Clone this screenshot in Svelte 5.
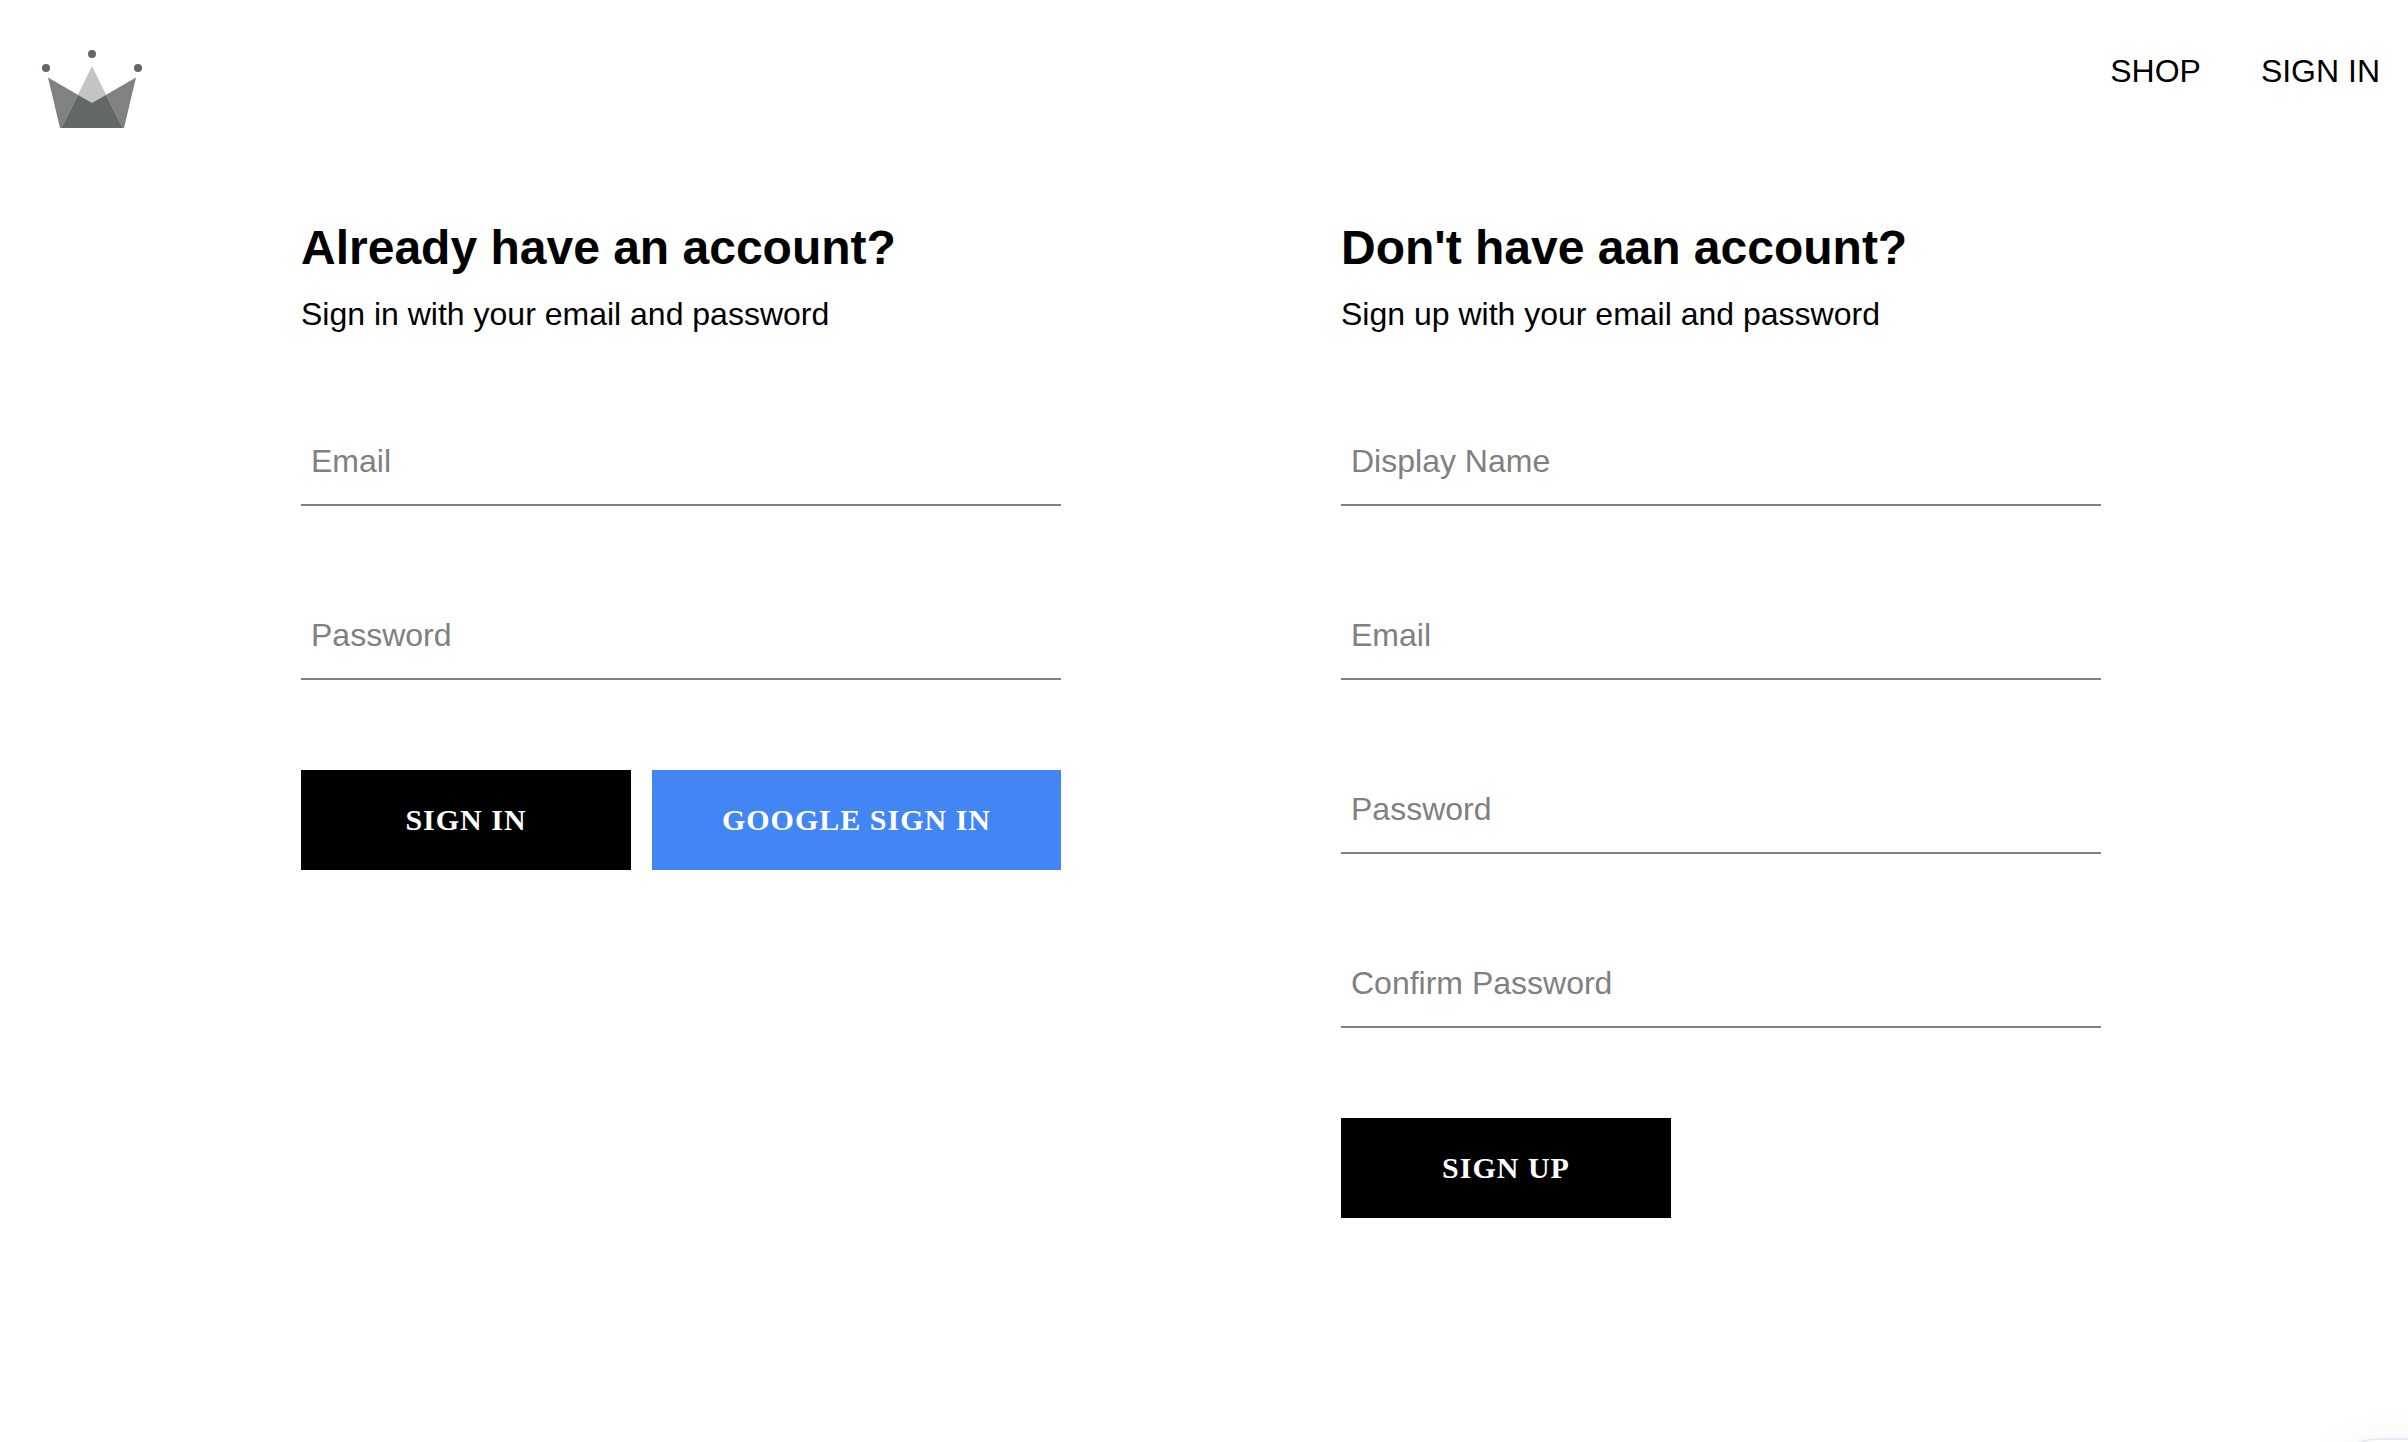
<script>
  const signInFields = [
    { id: 'signin-email', label: 'Email', type: 'email' },
    { id: 'signin-password', label: 'Password', type: 'password' },
  ];
  const signUpFields = [
    { id: 'signup-name', label: 'Display Name', type: 'text' },
    { id: 'signup-email', label: 'Email', type: 'email' },
    { id: 'signup-password', label: 'Password', type: 'password' },
    { id: 'signup-confirm', label: 'Confirm Password', type: 'password' },
  ];
  const stay = (event) => event.preventDefault();
</script>

{#snippet fieldList(fields)}
  {#each fields as field (field.id)}
    <div class="field">
      <input id={field.id} type={field.type} placeholder={field.label} aria-label={field.label} />
    </div>
  {/each}
{/snippet}

<div class="page">
  <header>
    <a class="logo" href="#home" aria-label="Home">
      <svg viewBox="0 0 100 78" aria-hidden="true">
        <polygon points="6,27.5 50,53 94,27.5 82,78 18,78" fill="#808282" />
        <polygon points="50,16 80.5,78 19.5,78" fill="#c3c5c5" />
        <polygon points="36,45 50,53 64,45 80.5,78 19.5,78" fill="#626767" />
        <circle cx="50" cy="4" r="4" fill="#626767" />
        <circle cx="4" cy="18" r="4" fill="#626767" />
        <circle cx="96" cy="18" r="4" fill="#626767" />
      </svg>
    </a>
    <nav>
      <a href="#shop">SHOP</a>
      <a href="#signin">SIGN IN</a>
    </nav>
  </header>

  <main>
    <section>
      <h2>Already have an account?</h2>
      <p>Sign in with your email and password</p>
      <form onsubmit={stay}>
        {@render fieldList(signInFields)}
        <div class="actions">
          <button type="submit">SIGN IN</button>
          <button type="button" class="google">GOOGLE SIGN IN</button>
        </div>
      </form>
    </section>
    <section>
      <h2>Don't have aan account?</h2>
      <p>Sign up with your email and password</p>
      <form onsubmit={stay}>
        {@render fieldList(signUpFields)}
        <div class="actions">
          <button type="submit">SIGN UP</button>
        </div>
      </form>
    </section>
  </main>
</div>
<div class="popup" aria-hidden="true"></div>

<style>
  :global(body) {
    margin: 0;
    background: #fff;
  }
  .page {
    padding: 40px 28px 40px 22px;
    font-family: 'Liberation Sans', Arial, sans-serif;
    font-size: 32px;
    line-height: 36px;
    color: #000;
  }
  header {
    display: flex;
    justify-content: space-between;
    height: 140px;
    margin-bottom: 40px;
  }
  .logo {
    padding: 10px 20px;
  }
  .logo svg {
    display: block;
    width: 100px;
    height: 78px;
  }
  nav {
    display: flex;
    gap: 60px;
    padding-top: 13px;
  }
  nav a {
    color: inherit;
    text-decoration: none;
  }
  main {
    display: flex;
    justify-content: space-between;
    max-width: 1800px;
    margin: 0 auto;
  }
  section {
    width: 760px;
  }
  h2 {
    margin: 0;
    font-size: 48px;
    line-height: 56px;
  }
  p {
    margin: 20px 0 0;
  }
  form {
    padding-top: 90px;
  }
  .field {
    margin-bottom: 90px;
  }
  input {
    display: block;
    box-sizing: border-box;
    width: 100%;
    height: 84px;
    padding: 18px 20px 22px 10px;
    border: 0;
    border-bottom: 2px solid #808080;
    border-radius: 0;
    background: #fff;
    font: inherit;
    color: #808080;
  }
  input::placeholder {
    color: #808080;
    opacity: 1;
  }
  .actions {
    display: flex;
    justify-content: space-between;
  }
  button {
    min-width: 330px;
    height: 100px;
    padding: 0 70px;
    border: 0;
    background: #000;
    color: #fff;
    font-family: 'Liberation Serif', 'Times New Roman', serif;
    font-size: 30px;
    font-weight: bold;
    letter-spacing: 1px;
    cursor: pointer;
  }
  .google {
    background: #4285f4;
  }
  /* Rounded card that peeks in from the bottom right corner of the window */
  .popup {
    position: fixed;
    right: -300px;
    bottom: -196px;
    box-sizing: border-box;
    width: 378px;
    height: 200px;
    border: 2px solid #e6eaf6;
    border-radius: 48px;
    background: #fff;
    box-shadow: 0 8px 48px rgba(0, 0, 0, 0.06);
  }
</style>
